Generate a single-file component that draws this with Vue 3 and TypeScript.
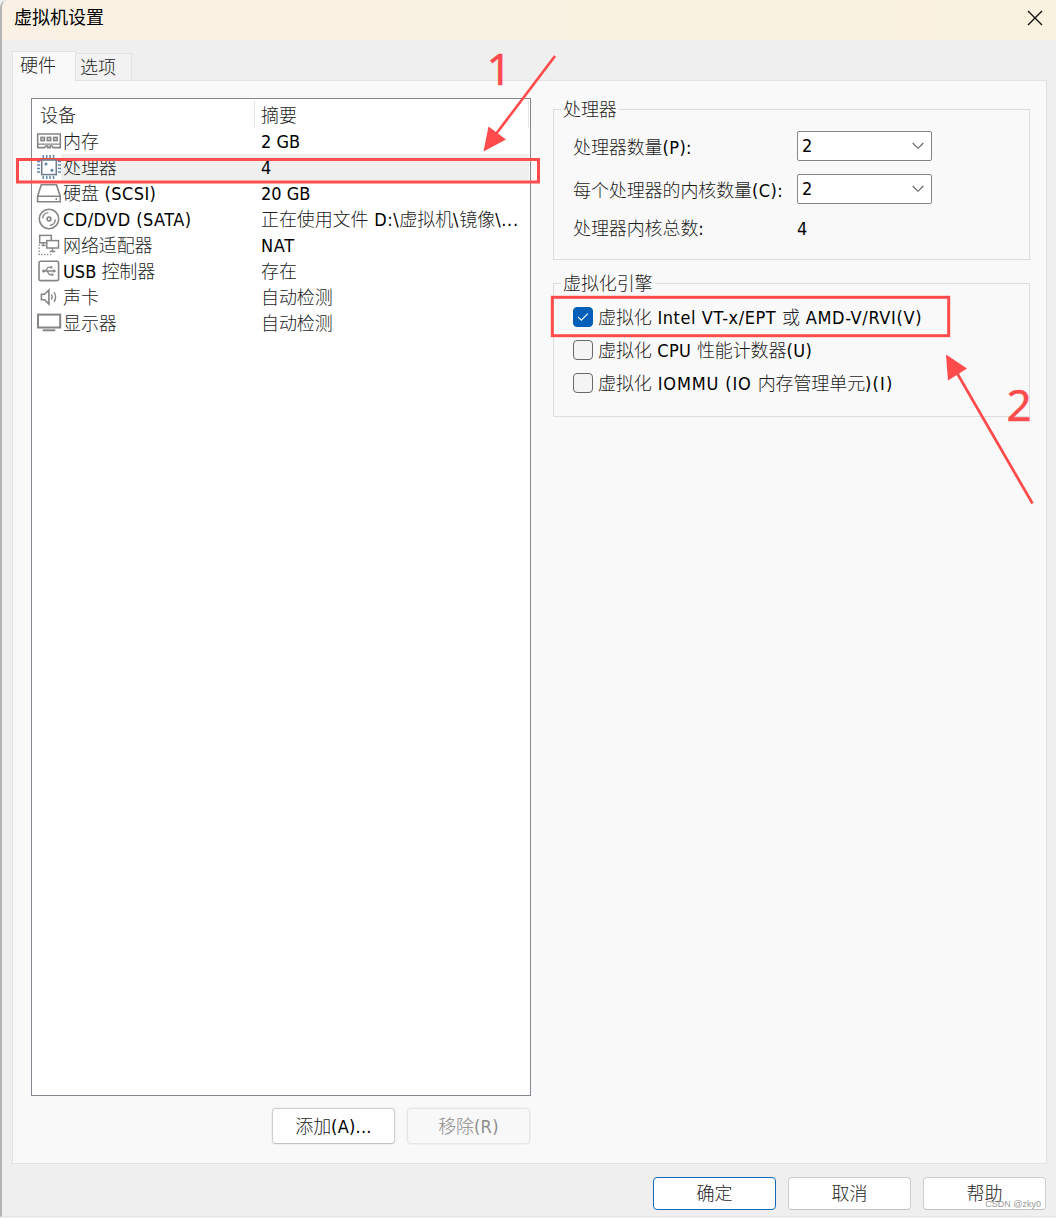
<script setup lang="ts">
import { h, ref, type FunctionalComponent } from 'vue'

interface Device {
  icon: string
  name: string
  summary: string
}

const devices: Device[] = [
  { icon: 'memory', name: '内存', summary: '2 GB' },
  { icon: 'cpu', name: '处理器', summary: '4' },
  { icon: 'disk', name: '硬盘 (SCSI)', summary: '20 GB' },
  { icon: 'cd', name: 'CD/DVD (SATA)', summary: '正在使用文件 D:\\虚拟机\\镜像\\...' },
  { icon: 'net', name: '网络适配器', summary: 'NAT' },
  { icon: 'usb', name: 'USB 控制器', summary: '存在' },
  { icon: 'sound', name: '声卡', summary: '自动检测' },
  { icon: 'display', name: '显示器', summary: '自动检测' },
]

const selected = ref(1)

const engineOptions = ref([
  { label: '虚拟化 Intel VT-x/EPT 或 AMD-V/RVI(V)', checked: true },
  { label: '虚拟化 CPU 性能计数器(U)', checked: false },
  { label: '虚拟化 IOMMU (IO 内存管理单元)(I)', checked: false },
])

const processorFields = [
  { label: '处理器数量(P):', value: '2' },
  { label: '每个处理器的内核数量(C):', value: '2' },
]

const tracking: Record<string, number> = {
  ' (SCSI)': 0.45,
  'CD/DVD (SATA)': 0.45,
  NAT: 0.7,
  ' D:\\': 0.6,
  '\\': 0.8,
  '\\...': 0.7,
  '(P):': 0.4,
  '(C):': 0.4,
  ' Intel VT-x/EPT ': 0.56,
  ' AMD-V/RVI(V)': 0.65,
  ' CPU ': 0.4,
  '(U)': 0.4,
  ' IOMMU (IO ': 0.85,
  ')(I)': 1.2,
  '(A)...': 0.25,
  '(R)': 0.3,
}

// Splits a label into Latin and Chinese runs, so that each gets its own tracking.
const Mixed: FunctionalComponent<{ text: string }> = (props) =>
  h(
    'span',
    { class: 'mixed' },
    (props.text.match(/[\u4e00-\u9fff]+|[^\u4e00-\u9fff]+/g) ?? []).map((run) =>
      /[\u4e00-\u9fff]/.test(run)
        ? h('span', { class: 'han' }, run)
        : h('span', { class: 'latin', style: { letterSpacing: `${tracking[run] ?? 0}px` } }, run),
    ),
  )
Mixed.props = ['text']
</script>

<template>
  <div class="screen">
    <div class="window">
      <header class="titlebar">
        <span class="title">虚拟机设置</span>
        <svg class="close" width="16" height="16" viewBox="0 0 16 16">
          <path d="M1 1L15 15M15 1L1 15" stroke="#111" stroke-width="1.4" fill="none" />
        </svg>
      </header>

      <nav class="tabs">
        <div class="tab active"><Mixed text="硬件" /></div>
        <div class="tab"><Mixed text="选项" /></div>
      </nav>

      <main class="panel">
        <section class="left">
          <div class="list">
            <div class="head">
              <div class="c1"><Mixed text="设备" /></div>
              <div class="c2"><Mixed text="摘要" /></div>
            </div>
            <div
              v-for="(d, i) in devices"
              :key="d.icon"
              class="row"
              :class="{ selected: i === selected }"
              @click="selected = i"
            >
              <svg class="icon" width="26" height="26" viewBox="0 0 26 26" fill="none" stroke="#858585" stroke-width="1.6">
                <g v-if="d.icon === 'memory'">
                  <path d="M1.7 6H24.3V19.6H17.3L16 18H14.3V19.6H11.7V18H10L8.7 19.6H1.7Z" />
                  <path d="M1.7 16.2H24.3" stroke-width="1.3" />
                  <g fill="#c4c4c4" stroke-width="1.4">
                    <rect x="4.9" y="9.3" width="3.6" height="3.4" />
                    <rect x="11.2" y="9.3" width="3.6" height="3.4" />
                    <rect x="17.6" y="9.3" width="3.6" height="3.4" />
                  </g>
                </g>
                <g v-else-if="d.icon === 'cpu'" stroke="#5f86a8">
                  <rect x="5.7" y="6" width="14.6" height="14.6" fill="#fff" stroke="#6f7f8f" />
                  <path stroke-width="1.5" d="M7.3 1V4M10.7 1V4M14 1V4M17.5 1V4M7.3 22V25M10.7 22V25M14 22V25M17.5 22V25M1 7.5H4M1 11H4M1 14.5H4M1 18H4M22 7.5H25M22 11H25M22 14.5H25M22 18H25" />
                  <circle cx="10" cy="10" r="1.5" fill="#5f86a8" stroke="none" />
                  <circle cx="16" cy="16.2" r="1.5" fill="#5f86a8" stroke="none" />
                </g>
                <g v-else-if="d.icon === 'disk'">
                  <path d="M5.3 4.7H20.5L24.2 16.2V21.7H1.6V16.2ZM1.6 16.2H24.2" />
                  <circle cx="20.3" cy="18.9" r="1" fill="#858585" stroke="none" />
                </g>
                <g v-else-if="d.icon === 'cd'">
                  <circle cx="13" cy="13" r="9.7" />
                  <circle cx="13" cy="13" r="1.9" />
                  <path stroke-width="1.4" d="M6.6 12.5A6.4 6.4 0 0 1 12.3 6.6M19.4 13.5A6.4 6.4 0 0 1 13.7 19.4" />
                </g>
                <g v-else-if="d.icon === 'net'" stroke-width="1.5">
                  <rect x="3.7" y="3.4" width="11.6" height="7.4" />
                  <rect x="10.8" y="8.6" width="11.7" height="7.4" fill="#fff" />
                  <path d="M16.5 16V19.3M13.7 19.4H19.3M7.3 11V13.4M5.5 13.4H9.5" />
                  <path d="M3.2 12.5V22.6H17" stroke-dasharray="1.3 1.7" />
                </g>
                <g v-else-if="d.icon === 'usb'">
                  <rect x="3" y="3.2" width="19.6" height="19.4" rx="1.8" />
                  <path stroke-width="1.3" d="M7 13H19M9.5 13L12 9.3H14.6M11 13L13.3 16.7H15.8" />
                  <circle cx="7.6" cy="13" r="1.5" fill="#858585" stroke="none" />
                  <path d="M17.4 11L20.2 13L17.4 15Z" fill="#858585" stroke="none" />
                  <path d="M14.2 8.2H16.4V10.4H14.2ZM15.2 15.6H17.4V17.8H15.2Z" fill="#858585" stroke="none" />
                </g>
                <g v-else-if="d.icon === 'sound'">
                  <path d="M5.4 10.2H8.6L12.9 5.9V20.1L8.6 15.8H5.4Z" />
                  <path stroke-width="1.4" d="M15.5 10.3Q17 13 15.5 15.7M18 8.2Q21.2 13 18 17.8" />
                </g>
                <g v-else>
                  <rect x="2" y="4.6" width="22.2" height="12.9" stroke-width="2" />
                  <path d="M6.7 20.3H19.3" stroke-width="2" />
                </g>
              </svg>
              <div class="cells">
                <span class="name"><Mixed :text="d.name" /></span>
                <span class="summary"><Mixed :text="d.summary" /></span>
              </div>
            </div>
          </div>
          <div class="actions">
            <button class="btn tall"><Mixed text="添加(A)..." /></button>
            <button class="btn tall disabled" disabled><Mixed text="移除(R)" /></button>
          </div>
        </section>

        <section class="right">
          <fieldset class="group processors">
            <legend><Mixed text="处理器" /></legend>
            <div v-for="f in processorFields" :key="f.label" class="field">
              <span class="label"><Mixed :text="f.label" /></span>
              <div class="select">
                <Mixed :text="f.value" />
                <svg width="12" height="8" viewBox="0 0 12 8">
                  <path d="M0.7 1L6 6.3L11.3 1" fill="none" stroke="#606060" stroke-width="1.1" />
                </svg>
              </div>
            </div>
            <div class="field total">
              <span class="label"><Mixed text="处理器内核总数:" /></span>
              <Mixed text="4" />
            </div>
          </fieldset>

          <fieldset class="group engine">
            <legend><Mixed text="虚拟化引擎" /></legend>
            <div v-for="o in engineOptions" :key="o.label" class="check" @click="o.checked = !o.checked">
              <span class="box" :class="{ on: o.checked }">
                <svg v-if="o.checked" width="12" height="10" viewBox="0 0 12 10">
                  <path d="M1 4.8L4.3 8.1L10.8 1.6" fill="none" stroke="#fff" stroke-width="1.1" />
                </svg>
              </span>
              <span class="caption"><Mixed :text="o.label" /></span>
            </div>
          </fieldset>
        </section>
      </main>

      <footer class="footer">
        <button class="btn primary"><Mixed text="确定" /></button>
        <button class="btn"><Mixed text="取消" /></button>
        <button class="btn"><Mixed text="帮助" /></button>
      </footer>
    </div>

    <svg class="notes" width="1056" height="1218" viewBox="0 0 1056 1218">
      <g fill="none" stroke="#ff4b4b" stroke-width="3">
        <rect x="17.5" y="159.5" width="521" height="22.5" />
        <rect x="552.3" y="297.3" width="396.4" height="38.4" />
        <path d="M555 56L496 134" stroke-width="2.7" />
        <path d="M1032.5 503.5L957 373" stroke-width="2.7" />
      </g>
      <g fill="#ff4b4b">
        <path d="M483.5 151.5L488.5 126.5L506 139.5Z" />
        <path d="M946 354.5L967 368.5L948 380.5Z" />
        <text class="num" x="486.5" y="85">1</text>
        <text class="num" x="1006.5" y="420.5">2</text>
      </g>
    </svg>
    <span class="watermark">CSDN @zky0</span>
  </div>
</template>

<style>
body {
  margin: 0;
  background: #efefef;
}
.mixed {
  white-space: pre;
}
.mixed .han {
  font-weight: 300;
  letter-spacing: -0.1px;
  color: #1c1c1c;
}
.disabled .han,
.disabled .latin {
  color: #8d8d8d;
}
</style>

<style scoped>
* {
  box-sizing: border-box;
}
.screen {
  position: relative;
  width: 1056px;
  height: 1218px;
  overflow: hidden;
  background: #efefef;
  font-family: 'DejaVu Sans Condensed', 'Noto Sans CJK SC', sans-serif;
  font-size: 18px;
  line-height: 20px;
  color: #000;
}
.window {
  height: 1217px;
  display: flex;
  flex-direction: column;
  border-left: 2px solid #b4b4b4;
  border-top-left-radius: 8px;
  border-bottom: 1px solid #e4e4e4;
  background: #efefef;
  overflow: hidden;
}
.titlebar {
  flex: none;
  height: 40px;
  padding: 0 13px 5px 12px;
  display: flex;
  align-items: center;
  justify-content: space-between;
  background: linear-gradient(90deg, #faf1e4, #f9f2de);
}
.title {
  padding-bottom: 3px;
  font-family: 'Noto Sans CJK SC', sans-serif;
}
.tabs {
  flex: none;
  height: 41px;
  padding: 11px 0 0 10px;
  display: flex;
  align-items: flex-end;
}
.tab {
  height: 28px;
  width: 56px;
  padding: 4px 0 0 4px;
  border: 1px solid #e2e2e2;
  border-left: none;
  background: #f2f2f2;
}
.tab.active {
  position: relative;
  z-index: 1;
  height: 30px;
  width: 64px;
  padding: 4px 0 0 7px;
  border: 1px solid #e2e2e2;
  border-bottom: none;
  background: #f9f9f9;
}
.panel {
  flex: none;
  width: 1035px;
  height: 1084px;
  margin: -1px 0 0 10px;
  padding: 17px 16px 0 18px;
  display: flex;
  gap: 22px;
  border: 1px solid #e2e2e2;
  background: #f9f9f9;
}
.left {
  width: 500px;
}
.list {
  height: 998px;
  border: 1px solid #828790;
  background: #fff;
}
.head {
  display: flex;
  height: 29px;
}
.head .c1,
.head .c2 {
  height: 28px;
  margin-top: 1px;
  padding: 6px 0 0 8px;
  border-right: 1px solid #e5e5e5;
}
.head .c1 {
  width: 223px;
}
.head .c2 {
  width: 274px;
  padding-left: 6px;
}
.row {
  display: flex;
  height: 26px;
  padding: 0 1px 0 4px;
}
.icon {
  flex: none;
  margin-right: -1px;
  overflow: visible;
  z-index: 1;
}
.cells {
  flex: 1;
  display: flex;
  align-items: center;
  padding: 2px 0 0 2px;
}
.row.selected .cells {
  background: #efefef;
}
.name {
  width: 198px;
}
.actions {
  display: flex;
  justify-content: flex-end;
  gap: 12px;
  margin-top: 12px;
  padding-right: 1px;
}
.btn {
  width: 123px;
  height: 33px;
  padding: 0;
  border: 1px solid #cfcfcf;
  border-bottom-color: #c2c2c2;
  border-radius: 4px;
  background: #fefefe;
  font: inherit;
  color: #000;
}
.btn.tall {
  height: 36px;
  padding-top: 2px;
  box-shadow: 0 0 0 1px #f0f0f0;
}
.btn.disabled {
  border-color: #e6e6e6;
  background: #f8f8f8;
}
.btn.primary {
  border-color: #0f6cbd;
}
.right {
  width: 477px;
}
.group {
  margin: 0;
  min-width: 0;
  border: 1px solid #dcdcdc;
}
.group legend {
  height: 20px;
  padding: 1px 2px 0;
}
.processors {
  height: 161px;
  margin-top: 1px;
  padding: 12px 0 0 19px;
}
.processors legend {
  margin-left: -12px;
}
.field {
  display: flex;
  align-items: center;
  height: 30px;
  margin-bottom: 13px;
}
.label {
  width: 224px;
}
.field .label {
  padding-top: 3px;
}
.select {
  width: 135px;
  height: 30px;
  padding: 0 7px 0 4px;
  display: flex;
  align-items: center;
  justify-content: space-between;
  border: 1px solid #868686;
  border-radius: 2px;
  background: #fff;
}
.field.total {
  height: 26px;
  margin-top: -1px;
}
.total .label {
  padding-top: 0;
}
.engine {
  height: 144px;
  margin-top: 13px;
  padding: 14px 0 0 19px;
}
.engine legend {
  margin-left: -12px;
}
.check {
  display: flex;
  align-items: center;
  gap: 5px;
  height: 20px;
  margin-bottom: 13px;
}
.caption {
  padding-top: 2px;
}
.box {
  width: 20px;
  height: 20px;
  display: flex;
  align-items: center;
  justify-content: center;
  border: 1px solid #6a6a6a;
  border-radius: 4px;
  background: #f4f4f4;
}
.box.on {
  border-color: #005fb8;
  background: #005fb8;
}
.footer {
  display: flex;
  justify-content: flex-end;
  gap: 12px;
  padding: 13px 10px 0 0;
}
.notes {
  position: absolute;
  left: 0;
  top: 0;
  pointer-events: none;
}
.num {
  font-family: 'Noto Sans', 'Open Sans', sans-serif;
  font-size: 44px;
  stroke: #ff4b4b;
  stroke-width: 0.5px;
}
.watermark {
  position: absolute;
  right: 15px;
  bottom: 7px;
  font-family: 'Liberation Sans', sans-serif;
  font-size: 9px;
  line-height: 14px;
  color: #999;
}
</style>
